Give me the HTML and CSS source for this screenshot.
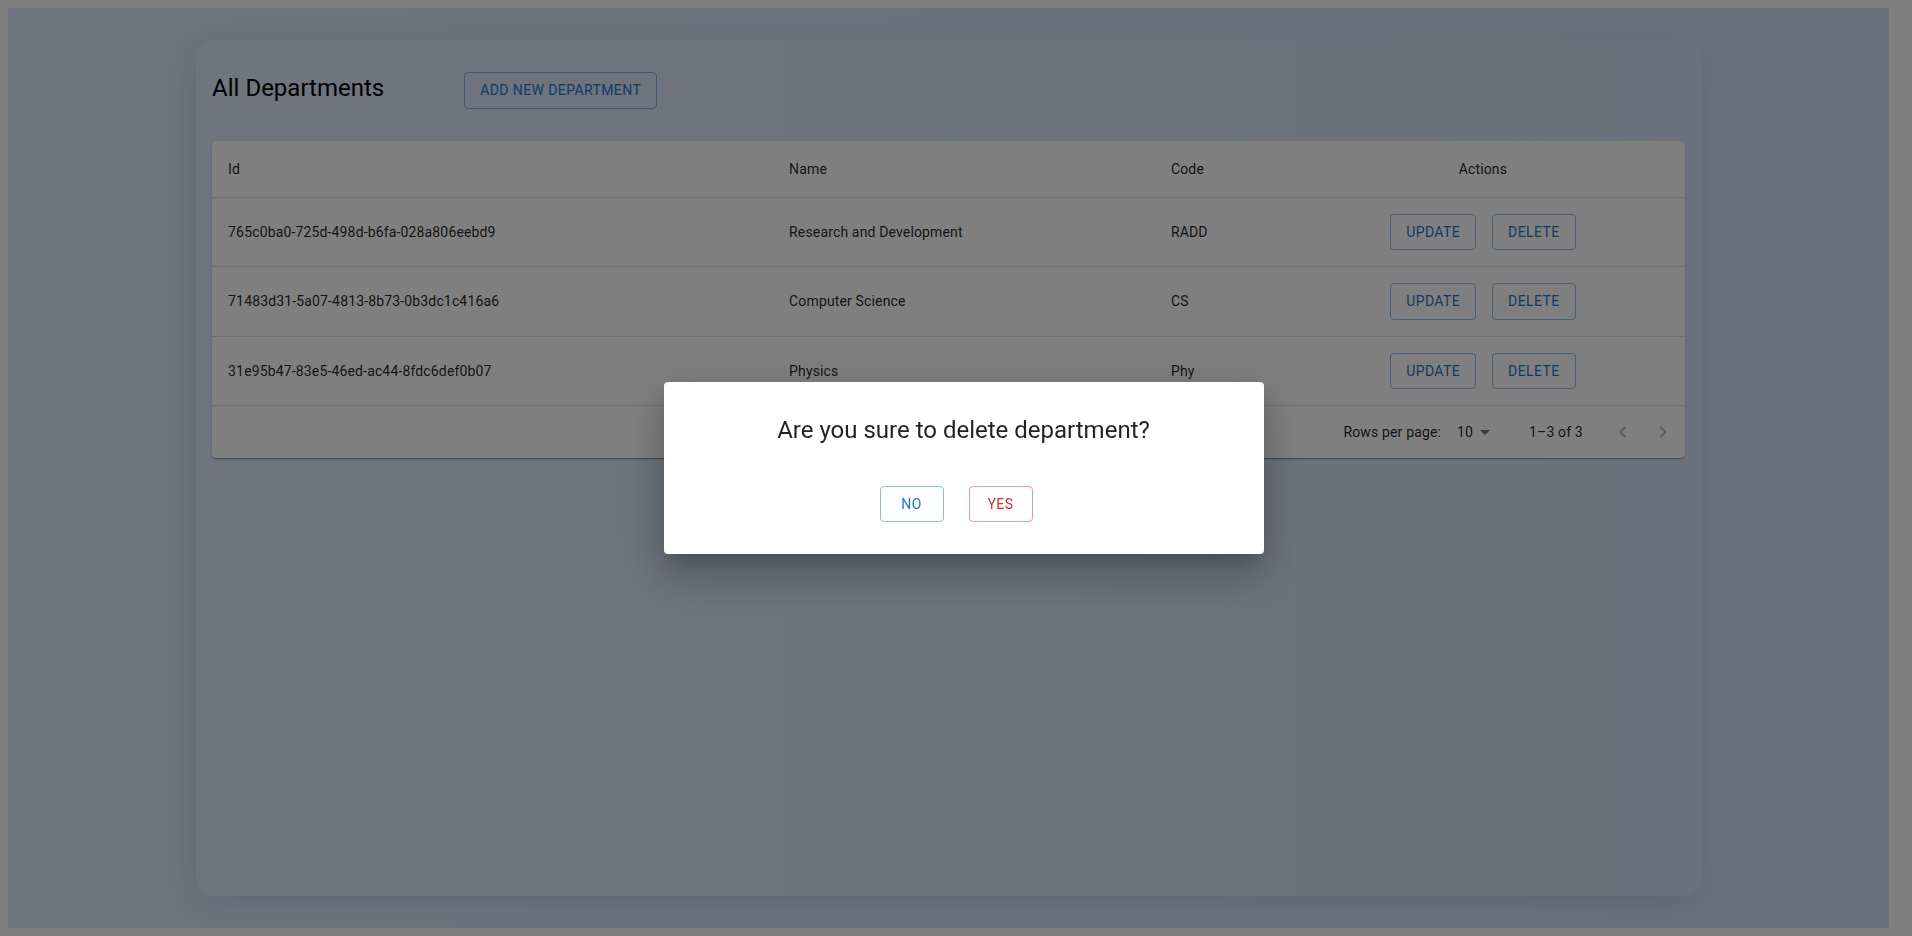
FILE: index.html
```html
<!DOCTYPE html>
<html lang="en">
<head>
<meta charset="utf-8">
<title>All Departments</title>
<link rel="stylesheet" href="styles.css">
</head>
<body>
<div class="page">
  <div class="card">
    <div class="card-header">
      <h1 class="title">All Departments</h1>
      <button class="btn btn-primary">Add new department</button>
    </div>
    <div class="table-paper">
      <table class="table">
        <colgroup>
          <col class="col-id">
          <col class="col-name">
          <col class="col-code">
          <col class="col-actions">
        </colgroup>
        <thead>
          <tr>
            <th>Id</th>
            <th>Name</th>
            <th>Code</th>
            <th class="center">Actions</th>
          </tr>
        </thead>
        <tbody>
          <tr>
            <td>765c0ba0-725d-498d-b6fa-028a806eebd9</td>
            <td>Research and Development</td>
            <td>RADD</td>
            <td><div class="actions"><button class="btn btn-primary">Update</button><button class="btn btn-primary">Delete</button></div></td>
          </tr>
          <tr>
            <td>71483d31-5a07-4813-8b73-0b3dc1c416a6</td>
            <td>Computer Science</td>
            <td>CS</td>
            <td><div class="actions"><button class="btn btn-primary">Update</button><button class="btn btn-primary">Delete</button></div></td>
          </tr>
          <tr>
            <td>31e95b47-83e5-46ed-ac44-8fdc6def0b07</td>
            <td>Physics</td>
            <td>Phy</td>
            <td><div class="actions"><button class="btn btn-primary">Update</button><button class="btn btn-primary">Delete</button></div></td>
          </tr>
        </tbody>
      </table>
      <div class="pagination">
        <span class="pg-label">Rows per page:</span>
        <div class="pg-select">
          <span>10</span>
          <svg class="pg-select-icon" viewBox="0 0 24 24" width="24" height="24"><path d="M7 10l5 5 5-5z"/></svg>
        </div>
        <span class="pg-rows">1–3 of 3</span>
        <div class="pg-actions">
          <button class="icon-btn" disabled><svg viewBox="0 0 24 24" width="24" height="24"><path d="M15.41 16.59L10.83 12l4.58-4.59L14 6l-6 6 6 6 1.41-1.41z"/></svg></button>
          <button class="icon-btn" disabled><svg viewBox="0 0 24 24" width="24" height="24"><path d="M8.59 16.59L13.17 12 8.59 7.41 10 6l6 6-6 6-1.41-1.41z"/></svg></button>
        </div>
      </div>
    </div>
  </div>
</div>
<div class="backdrop"></div>
<div class="modal-wrap">
  <div class="dialog">
    <h2 class="dialog-title">Are you sure to delete department?</h2>
    <div class="dialog-actions">
      <button class="btn btn-primary">No</button>
      <button class="btn btn-error">Yes</button>
    </div>
  </div>
</div>
</body>
</html>
```
FILE: styles.css
```css
html, body {
  height: 100%;
}
body {
  margin: 8px;
  padding-right: 15px;
  box-sizing: border-box;
  font-family: Roboto, "Liberation Sans", Arial, sans-serif;
  overflow: hidden;
  background: #fff;
  height: auto;
}
.page {
  height: calc(100vh - 16px);
  box-sizing: border-box;
  padding: 32px 0;
  background: linear-gradient(90deg, #dee8fd 0%, #d4e1f8 100%);
}
.card {
  width: 80%;
  height: 100%;
  margin: 0 auto;
  box-sizing: border-box;
  padding: 16px;
  border-radius: 16px;
  background: rgba(255, 255, 255, 0.06);
  box-shadow: 0 8px 32px rgba(31, 38, 80, 0.12);
}
.card-header {
  display: flex;
  align-items: flex-start;
  margin: 16px 0 32px;
}
.title {
  margin: 0 80px 0 0;
  font-size: 24px;
  font-weight: 400;
  line-height: 32px;
  color: #000;
}
.btn {
  display: inline-flex;
  align-items: center;
  justify-content: center;
  box-sizing: border-box;
  min-width: 64px;
  padding: 5px 15px;
  font-family: Roboto, "Liberation Sans", Arial, sans-serif;
  font-size: 14px;
  font-weight: 400;
  line-height: 1.75;
  letter-spacing: 0.02857em;
  text-transform: uppercase;
  background: transparent;
  border-radius: 4px;
  cursor: pointer;
}
.btn-primary {
  color: #1976d2;
  border: 1px solid rgba(25, 118, 210, 0.5);
}
.btn-error {
  color: #d32f2f;
  border: 1px solid rgba(211, 47, 47, 0.5);
}
.table-paper {
  background: #fff;
  border-radius: 4px;
  overflow: hidden;
  box-shadow: 0px 2px 1px -1px rgba(0,0,0,0.2), 0px 1px 1px 0px rgba(0,0,0,0.14), 0px 1px 3px 0px rgba(0,0,0,0.12);
}
.table {
  width: 100%;
  border-collapse: collapse;
  table-layout: fixed;
}
.col-id { width: 38.09%; }
.col-name { width: 25.93%; }
.col-code { width: 8.55%; }
.col-actions { width: 27.43%; }
.table th,
.table td {
  padding: 16px;
  text-align: left;
  font-size: 14px;
  letter-spacing: 0.01071em;
  color: rgba(0, 0, 0, 0.87);
  border-bottom: 1px solid rgb(224, 224, 224);
  vertical-align: middle;
}
.table th {
  font-weight: 400;
  line-height: 24px;
}
.table td {
  font-weight: 400;
  line-height: 20px;
}
.table th.center {
  text-align: center;
}
.actions {
  display: flex;
  justify-content: center;
  gap: 16px;
}
.pagination {
  display: flex;
  justify-content: flex-end;
  align-items: center;
  min-height: 52px;
  padding: 0 2px 0 16px;
  font-size: 14px;
  line-height: 1.43;
  letter-spacing: 0.01071em;
  color: rgba(0, 0, 0, 0.87);
}
.pg-select {
  position: relative;
  margin: 0 32px 0 8px;
  padding: 0 24px 0 8px;
  line-height: 1.4375em;
}
.pg-select-icon {
  position: absolute;
  right: 0;
  top: 50%;
  transform: translateY(-50%);
  fill: rgba(0, 0, 0, 0.54);
}
.pg-actions {
  display: flex;
  margin-left: 20px;
}
.icon-btn {
  width: 40px;
  height: 40px;
  padding: 8px;
  border: 0;
  background: transparent;
  display: flex;
  align-items: center;
  justify-content: center;
}
.icon-btn svg {
  fill: rgba(0, 0, 0, 0.26);
}
.backdrop {
  position: fixed;
  inset: 0;
  background: rgba(0, 0, 0, 0.5);
}
.modal-wrap {
  position: fixed;
  inset: 0;
  padding-left: 15px;
  display: flex;
  align-items: center;
  justify-content: center;
}
.dialog {
  width: 600px;
  box-sizing: border-box;
  padding: 32px;
  background: #fff;
  border-radius: 4px;
  box-shadow: 0px 11px 15px -7px rgba(0,0,0,0.2), 0px 24px 38px 3px rgba(0,0,0,0.14), 0px 9px 46px 8px rgba(0,0,0,0.12);
}
.dialog-title {
  margin: 0;
  font-size: 24px;
  font-weight: 400;
  line-height: 32px;
  text-align: center;
  color: rgba(0, 0, 0, 0.87);
}
.dialog-actions {
  display: flex;
  justify-content: center;
  gap: 25px;
  margin-top: 40px;
  padding-right: 15px;
}
```
